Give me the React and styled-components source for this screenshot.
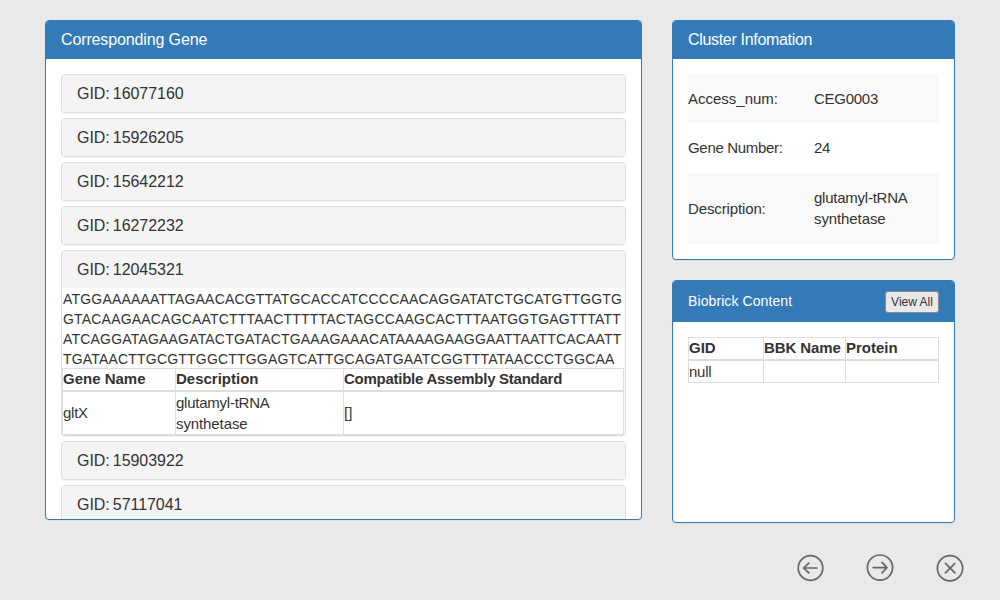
import React from "react";
import styled, { createGlobalStyle } from "styled-components";

const GlobalStyle = createGlobalStyle`
  *, *::before, *::after { box-sizing: border-box; }
  body {
    margin: 0;
    background: #e9e9e9;
    color: #333;
    font-family: "Liberation Sans", Arial, Helvetica, sans-serif;
    font-size: 15px;
    line-height: 21px;
  }
`;

const Page = styled.div`
  display: flex;
  flex-direction: column;
  width: 1000px;
  height: 600px;
  padding: 20px 45px 0;
  overflow: hidden;
`;

const Columns = styled.main`
  display: flex;
  gap: 30px;
  height: 503px;
  align-items: flex-start;
`;

const Side = styled.aside`
  display: flex;
  flex-direction: column;
  gap: 20px;
  width: 283px;
`;

const Panel = styled.section`
  display: flex;
  flex-direction: column;
  width: ${(p) => p.$width}px;
  height: ${(p) => p.$height}px;
  background: #fff;
  border: 1px solid #337ab7;
  border-radius: 4px;
  box-shadow: 0 1px 1px rgba(0, 0, 0, 0.05);
  overflow: hidden;
`;

const PanelHeader = styled.header`
  display: flex;
  flex: none;
  align-items: center;
  justify-content: space-between;
  height: ${(p) => (p.$tall ? 41 : 38)}px;
  padding: 0 15px;
  background: #337ab7;
  color: #fff;
`;

const PanelTitle = styled.h3`
  margin: 0;
  padding-bottom: ${(p) => (p.$small ? 2 : 0)}px;
  font-size: ${(p) => (p.$small ? 14 : 16)}px;
  font-weight: normal;
  line-height: 18px;
  letter-spacing: ${(p) => p.$tracking || 0}px;
`;

const PanelBody = styled.div`
  display: flex;
  flex-direction: column;
  flex: 1;
  min-height: 0;
  gap: 5px;
  padding: 15px 15px 0;
  overflow: hidden;
`;

const GeneItem = styled.article`
  flex: none;
  background: #fff;
  border: 1px solid #ddd;
  border-radius: 4px;
  box-shadow: 0 1px 1px rgba(0, 0, 0, 0.05);
  overflow: hidden;
`;

const GeneHeading = styled.div`
  height: 37px;
  padding: 10px 15px 0;
  background: #f4f4f4;
  font-size: 16px;
  line-height: 18px;
  letter-spacing: -0.05px;
  word-spacing: -1.3px;
`;

const Sequence = styled.div`
  height: 80px;
  padding: 1px 0 0 1px;
  overflow: hidden;
  font-size: 14px;
  line-height: 20px;
  white-space: nowrap;
  letter-spacing: 0.19px;
`;

const Table = styled.table`
  width: ${(p) => p.$width}px;
  table-layout: fixed;
  border-collapse: separate;
  border-spacing: 0;
  border-top: 1px solid #ddd;
  border-left: 1px solid #ddd;
`;

const Th = styled.th`
  width: ${(p) => p.$width}px;
  height: 23px;
  padding: 0;
  border-right: 1px solid #ddd;
  border-bottom: 2px solid #ddd;
  line-height: 19px;
  text-align: left;
  vertical-align: top;
  white-space: nowrap;
  letter-spacing: ${(p) => p.$tracking || 0}px;
`;

const Td = styled.td`
  height: 22px;
  padding: 0 0 ${(p) => (p.$raised ? 2 : 0)}px;
  border-right: 1px solid #ddd;
  border-bottom: 1px solid #ddd;
  vertical-align: middle;
`;

const InfoList = styled.div`
  display: flex;
  flex-direction: column;
`;

const InfoRow = styled.div`
  display: grid;
  grid-template-columns: 126px 110px;
  align-items: center;
  height: ${(p) => p.$height}px;
  padding-bottom: ${(p) => (p.$raised ? 2 : 0)}px;
  background: ${(p) => (p.$striped ? "#f9f9f9" : "#fff")};
`;

const InfoValue = styled.div`
  padding-bottom: 2px;
`;

const Text = styled.span`
  letter-spacing: ${(p) => p.$tracking || 0}px;
`;

const ViewButton = styled.button`
  width: 54px;
  height: 22px;
  padding: 0;
  border: 1px solid #8c8c8c;
  border-radius: 3px;
  background: #e9e9e9;
  color: #333;
  font-family: inherit;
  font-size: 12px;
  line-height: 18px;
  white-space: nowrap;
`;

const Controls = styled.nav`
  display: flex;
  justify-content: flex-end;
  gap: 42px;
  margin: 31px -9px 0 0;
`;

const IconButton = styled.button`
  display: flex;
  width: 28px;
  height: 28px;
  padding: 0;
  border: 0;
  background: none;
`;

const genesBefore = ["16077160", "15926205", "15642212", "16272232"];
const genesAfter = ["15903922", "57117041"];
const sequence = [
  "ATGGAAAAAATTAGAACACGTTATGCACCATCCCCAACAGGATATCTGCATGTTGGTG",
  "GTACAAGAACAGCAATCTTTAACTTTTTACTAGCCAAGCACTTTAATGGTGAGTTTATT",
  "ATCAGGATAGAAGATACTGATACTGAAAGAAACATAAAAGAAGGAATTAATTCACAATT",
  "TGATAACTTGCGTTGGCTTGGAGTCATTGCAGATGAATCGGTTTATAACCCTGGCAA",
];

function Gene({ id, children }) {
  return (
    <GeneItem>
      <GeneHeading>GID: {id}</GeneHeading>
      {children}
    </GeneItem>
  );
}

function CircleIcon({ label, d, cx = 14, cy = 14, r = 12.6 }) {
  return (
    <IconButton aria-label={label}>
      <svg width="28" height="28" viewBox="0 0 28 28" fill="none" stroke="#666" strokeLinecap="round" strokeLinejoin="round">
        <circle cx={cx} cy={cy} r={r} strokeWidth="1.7" />
        <path d={d} strokeWidth="1.7" />
      </svg>
    </IconButton>
  );
}

export default function App() {
  return (
    <>
      <GlobalStyle />
      <Page>
        <Columns>
          <Panel $width={597} $height={500}>
            <PanelHeader>
              <PanelTitle $tracking={-0.13}>Corresponding Gene</PanelTitle>
            </PanelHeader>
            <PanelBody>
              {genesBefore.map((id) => (
                <Gene key={id} id={id} />
              ))}
              <Gene id="12045321">
                <Sequence>
                  {sequence.map((line) => (
                    <div key={line}>{line}</div>
                  ))}
                </Sequence>
                <Table $width={562}>
                  <thead>
                    <tr>
                      <Th $width={113}>Gene Name</Th>
                      <Th $width={168}>Description</Th>
                      <Th $width={280} $tracking={-0.26}>Compatible Assembly Standard</Th>
                    </tr>
                  </thead>
                  <tbody>
                    <tr>
                      <Td $raised><Text $tracking={-0.25}>gltX</Text></Td>
                      <Td>
                        <Text $tracking={-0.24}>glutamyl-tRNA</Text>
                        <br />
                        <Text $tracking={-0.1}>synthetase</Text>
                      </Td>
                      <Td $raised>[]</Td>
                    </tr>
                  </tbody>
                </Table>
              </Gene>
              {genesAfter.map((id) => (
                <Gene key={id} id={id} />
              ))}
            </PanelBody>
          </Panel>
          <Side>
            <Panel $width={283} $height={240}>
              <PanelHeader>
                <PanelTitle $tracking={-0.32}>Cluster Infomation</PanelTitle>
              </PanelHeader>
              <PanelBody>
                <InfoList>
                  <InfoRow $striped $height={49}>
                    <Text>Access_num:</Text>
                    <Text $tracking={-0.27}>CEG0003</Text>
                  </InfoRow>
                  <InfoRow $raised $height={50}>
                    <Text $tracking={-0.31}>Gene Number:</Text>
                    <Text $tracking={-0.3}>24</Text>
                  </InfoRow>
                  <InfoRow $striped $height={71}>
                    <Text $tracking={-0.13}>Description:</Text>
                    <InfoValue>
                      <Text $tracking={-0.24}>glutamyl-tRNA</Text>
                      <br />
                      <Text $tracking={-0.1}>synthetase</Text>
                    </InfoValue>
                  </InfoRow>
                </InfoList>
              </PanelBody>
            </Panel>
            <Panel $width={283} $height={243}>
              <PanelHeader $tall>
                <PanelTitle $small $tracking={0.09}>Biobrick Content</PanelTitle>
                <ViewButton>View All</ViewButton>
              </PanelHeader>
              <PanelBody>
                <Table $width={251}>
                  <thead>
                    <tr>
                      <Th $width={75}>GID</Th>
                      <Th $width={82} $tracking={-0.08}>BBK Name</Th>
                      <Th $width={93}>Protein</Th>
                    </tr>
                  </thead>
                  <tbody>
                    <tr>
                      <Td><Text $tracking={-0.25}>null</Text></Td>
                      <Td />
                      <Td />
                    </tr>
                  </tbody>
                </Table>
              </PanelBody>
            </Panel>
          </Side>
        </Columns>
        <Controls>
          <CircleIcon label="Previous" cx={14.5} r={12.3} d="M21 14H7.6M12.8 9.1L7.6 14l5.2 4.9" />
          <CircleIcon label="Next" cy={13.6} d="M7.2 13.6h13.8M16 8.4l5 5.2-5 5.2" />
          <CircleIcon label="Close" cy={14.2} d="M9.5 9.4l9.4 9.4M18.9 9.4l-9.4 9.4" />
        </Controls>
      </Page>
    </>
  );
}
